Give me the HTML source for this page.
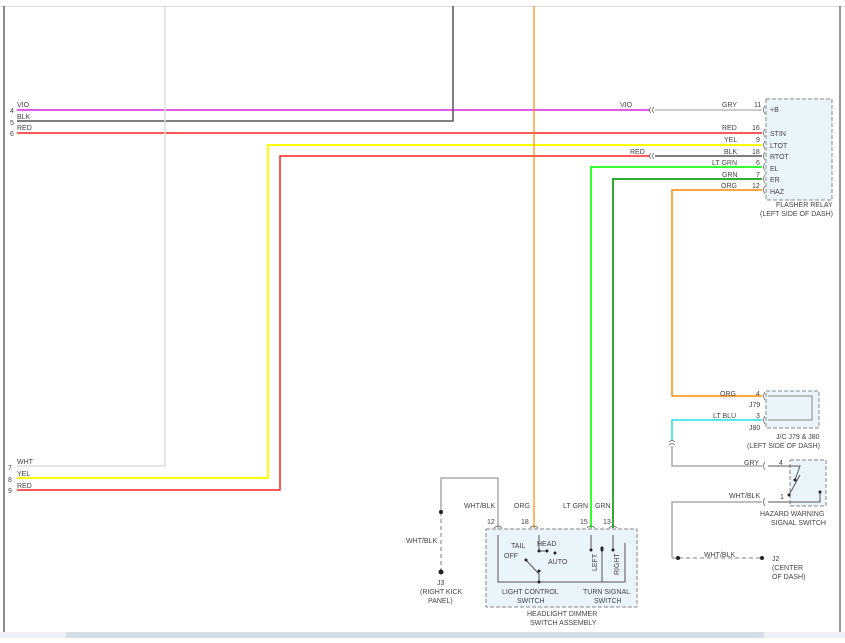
<!DOCTYPE html>
<html><head><style>
body{margin:0;width:845px;height:638px;overflow:hidden;background:#fff;font-family:"Liberation Sans",sans-serif}
svg text{font-family:"Liberation Sans",sans-serif;font-size:7px;fill:#444}
</style></head><body>
<svg width="845" height="638" xmlns="http://www.w3.org/2000/svg">
<rect x="0" y="6" width="845" height="1" fill="#ddd"/>
<line x1="4" y1="6" x2="4" y2="632" stroke="#666" stroke-width="1.5"/>
<line x1="840" y1="6" x2="840" y2="632" stroke="#333" stroke-width="1"/>
<rect x="766" y="99" width="66" height="101" fill="#eaf4fb" stroke="#888" stroke-dasharray="4,2"/>
<rect x="766" y="391" width="53" height="37" fill="#eaf4fb" stroke="#888" stroke-dasharray="4,2"/>
<rect x="790" y="460" width="36" height="46" fill="#eaf4fb" stroke="#888" stroke-dasharray="4,2"/>
<rect x="486" y="529" width="151" height="78" fill="#eaf4fb" stroke="#888" stroke-dasharray="4,2"/>
<g fill="none" stroke-width="1.5">
<path d="M17 110H650" stroke="#e020e0"/>
<path d="M655 110H762" stroke="#bbb"/>
<path d="M17 121H453V6" stroke="#555"/>
<path d="M17 133H762" stroke="#f22"/>
<path d="M17 478H268V145H762" stroke="#ff0" stroke-width="2"/>
<path d="M17 490H280V156H650" stroke="#f22"/>
<path d="M655 156H762" stroke="#555"/>
<path d="M591 528V167H762" stroke="#3f3" stroke-width="2"/>
<path d="M613 528V179H762" stroke="#3a3" stroke-width="2"/>
<path d="M762 396H672V190H762" stroke="#f80"/>
<path d="M17 466H165V6" stroke="#ddd"/>
<path d="M534 6V528" stroke="#f80" stroke-width="1.2"/>
<path d="M762 420H672V440" stroke="#2dd"/>
<path d="M672 446V466H762" stroke="#aaa"/>
<path d="M762 502H672V558" stroke="#aaa"/>
<path d="M672 558H762" stroke="#aaa" stroke-dasharray="4,3"/>
<path d="M498 529V478H441V512" stroke="#aaa"/>
<path d="M441 512V570" stroke="#aaa" stroke-dasharray="4,3"/>
<path d="M768 396H812V420H768" stroke="#888" stroke-width="1"/>
<path d="M768 466H800L795 480M789 495L800 475M768 502H820V492" stroke="#555" stroke-width="1"/>
<path d="M498 535V582H625M539 535V551H547M539 582V574L526 560M625 582V543M602 550V582" stroke="#555" stroke-width="1"/>
<path d="M591 535V550M613 535V550" stroke="#555" stroke-width="1"/>
</g>
<g fill="none" stroke="#666" stroke-width="0.8">
<path d="M651 107q-3 3 0 6M654 107q-3 3 0 6M651 153q-3 3 0 6M654 153q-3 3 0 6"/>
<path d="M765 106q-3 4 0 8M765 129q-3 4 0 8M765 141q-3 4 0 8M765 152q-3 4 0 8M765 163q-3 4 0 8M765 175q-3 4 0 8M765 186q-3 4 0 8"/>
<path d="M765 392q-3 4 0 8M765 416q-3 4 0 8M765 462q-3 4 0 8M765 498q-3 4 0 8"/>
<path d="M669 442q3 -3 6 0M669 445q3 -3 6 0"/>
<path d="M494 528q4 -4 8 0M530 528q4 -4 8 0M587 528q4 -4 8 0M609 528q4 -4 8 0"/>
</g>
<g fill="#222"><circle cx="441" cy="512" r="2"/><circle cx="441" cy="572" r="2.5"/><circle cx="678" cy="558" r="2"/><circle cx="762" cy="558" r="2"/>
<circle cx="539" cy="551" r="1.5"/><circle cx="547" cy="551" r="1.5"/><circle cx="526" cy="560" r="1.5"/><circle cx="555" cy="553" r="1.5"/><circle cx="539" cy="571" r="1.5"/><circle cx="539" cy="582" r="1.5"/><circle cx="591" cy="550" r="1.5"/><circle cx="602" cy="550" r="1.5"/><circle cx="613" cy="550" r="1.5"/><circle cx="602" cy="548" r="1.5"/><circle cx="795" cy="480" r="1.5"/><circle cx="789" cy="495" r="1.5"/><circle cx="820" cy="492" r="1.5"/></g>
<text x="17" y="107">VIO</text><text x="10" y="113">4</text>
<text x="17" y="119">BLK</text><text x="10" y="125">5</text>
<text x="17" y="130">RED</text><text x="10" y="136">6</text>
<text x="17" y="464">WHT</text><text x="8" y="470">7</text>
<text x="17" y="476">YEL</text><text x="8" y="482">8</text>
<text x="17" y="488">RED</text><text x="8" y="493">9</text>
<text x="620" y="107">VIO</text><text x="722" y="107">GRY</text><text x="754" y="107">11</text>
<text x="722" y="130">RED</text><text x="752" y="130">16</text>
<text x="724" y="142">YEL</text><text x="756" y="142">9</text>
<text x="630" y="154">RED</text><text x="724" y="154">BLK</text><text x="752" y="154">18</text>
<text x="712" y="165">LT GRN</text><text x="756" y="165">6</text>
<text x="722" y="177">GRN</text><text x="756" y="177">7</text>
<text x="721" y="188">ORG</text><text x="752" y="188">12</text>
<text x="770" y="112">+B</text><text x="770" y="136">STIN</text><text x="770" y="148">LTOT</text><text x="770" y="159">RTOT</text><text x="770" y="171">EL</text><text x="770" y="182">ER</text><text x="770" y="194">HAZ</text>
<text x="776" y="207">FLASHER RELAY</text><text x="760" y="216">(LEFT SIDE OF DASH)</text>
<text x="720" y="396">ORG</text><text x="756" y="396">4</text><text x="749" y="407">J79</text>
<text x="713" y="418">LT BLU</text><text x="756" y="418">3</text><text x="749" y="430">J80</text>
<text x="776" y="439">J/C J79 &amp; J80</text><text x="747" y="448">(LEFT SIDE OF DASH)</text>
<text x="744" y="465">GRY</text><text x="779" y="465">4</text>
<text x="729" y="498">WHT/BLK</text><text x="780" y="499">1</text>
<text x="760" y="516">HAZARD WARNING</text><text x="771" y="525">SIGNAL SWITCH</text>
<text x="704" y="557">WHT/BLK</text><text x="772" y="561">J2</text><text x="772" y="570">(CENTER</text><text x="772" y="579">OF DASH)</text>
<text x="464" y="508">WHT/BLK</text><text x="514" y="508">ORG</text><text x="563" y="508">LT GRN</text><text x="595" y="508">GRN</text>
<text x="487" y="524">12</text><text x="521" y="524">18</text><text x="580" y="524">15</text><text x="603" y="524">13</text>
<text x="406" y="543">WHT/BLK</text>
<text x="511" y="548">TAIL</text><text x="537" y="546">HEAD</text><text x="504" y="558">OFF</text><text x="548" y="564">AUTO</text>
<text x="597" y="571" transform="rotate(-90 597 571)">LEFT</text><text x="619" y="575" transform="rotate(-90 619 575)">RIGHT</text>
<text x="502" y="594">LIGHT CONTROL</text><text x="517" y="603">SWITCH</text>
<text x="583" y="594">TURN SIGNAL</text><text x="594" y="603">SWITCH</text>
<text x="527" y="616">HEADLIGHT DIMMER</text><text x="530" y="625">SWITCH ASSEMBLY</text>
<text x="437" y="585">J3</text><text x="420" y="594">(RIGHT KICK</text><text x="428" y="603">PANEL)</text>
<rect x="0" y="632" width="845" height="6" fill="#eef1f3"/>
<rect x="66" y="632" width="198" height="6" fill="#d5dde5"/>
<rect x="264" y="632" width="500" height="6" fill="#d5dde5"/>
</svg>
</body></html>
